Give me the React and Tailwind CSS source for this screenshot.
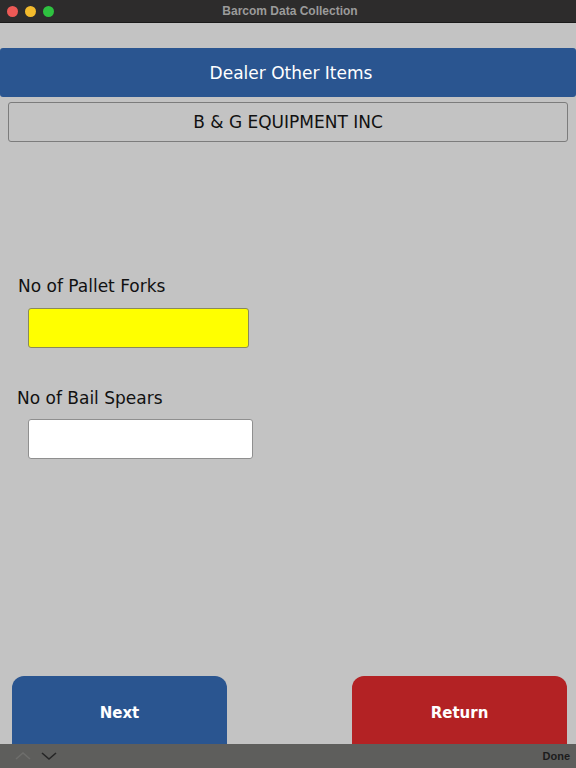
import { useState } from 'react'

// Dealer Other Items screen — Barcom Data Collection
export default function App() {
  const [forks, setForks] = useState('')
  const [spears, setSpears] = useState('')

  return (
    <div className="w-[576px] h-[768px] flex flex-col bg-[#c3c3c3] overflow-hidden" style={{ fontFamily: '"DejaVu Sans", Verdana, sans-serif' }}>
      {/* Window title bar */}
      <div className="relative h-[23px] shrink-0 flex items-center justify-center bg-[#2d2c2c] border-b border-[#1a1a1a]">
        <div className="absolute left-[7px] top-[6px] flex gap-[7px]">
          <span className="w-[11px] h-[11px] rounded-full bg-[#ed5a56]" />
          <span className="w-[11px] h-[11px] rounded-full bg-[#f3bb2d]" />
          <span className="w-[11px] h-[11px] rounded-full bg-[#2ec240]" />
        </div>
        <span className="text-[12px] font-bold text-[#9b9b9b] pl-[4px]" style={{ fontFamily: '"Liberation Sans", Arial, sans-serif' }}>
          Barcom Data Collection
        </span>
      </div>

      {/* Content */}
      <div className="flex-1 flex flex-col overflow-hidden pt-[25px]">
        <div className="h-[49px] shrink-0 flex items-center justify-center bg-[#2a5590] rounded-[3px]">
          <span className="text-[17px] text-white pl-[6px] pt-[2px]">Dealer Other Items</span>
        </div>

        <div className="mt-[5px] mx-[8px] h-[40px] shrink-0 flex items-center justify-center border border-[#7c7c7c] rounded-[3px]">
          <span className="text-[17px] text-[#111] leading-[20px]">B &amp; G EQUIPMENT INC</span>
        </div>

        <div className="pt-[134px] pl-[18px]">
          <div className="text-[17px] text-[#111] leading-[20px]">No of Pallet Forks</div>
          <input
            value={forks}
            onChange={(e) => setForks(e.target.value)}
            className="mt-[12px] ml-[10px] block w-[221px] h-[40px] bg-[#ffff00] border border-[#8a8a5a] rounded-[3px] outline-none px-2"
          />
        </div>

        <div className="pt-[40px] pl-[17px]">
          <div className="text-[17px] text-[#111] leading-[20px]">No of Bail Spears</div>
          <input
            value={spears}
            onChange={(e) => setSpears(e.target.value)}
            className="mt-[11px] ml-[11px] block w-[225px] h-[40px] bg-white border border-[#8f8f8f] rounded-[3px] outline-none px-2"
          />
        </div>

        <div className="mt-auto flex justify-between pl-[12px] pr-[9px] translate-y-[12px]">
          <button className="w-[215px] h-[80px] pb-[6px] rounded-[12px] bg-[#2a5590] text-white text-[15px] font-bold">
            Next
          </button>
          <button className="w-[215px] h-[80px] pb-[6px] rounded-[12px] bg-[#b32224] text-white text-[15px] font-bold">
            Return
          </button>
        </div>
      </div>

      {/* Keyboard accessory bar */}
      <div className="h-[24px] shrink-0 flex items-center justify-between bg-[#5e5e5c] pl-[14px] pr-[6px]">
        <div className="flex items-center gap-[8px]">
          <svg width="18" height="10" viewBox="0 0 18 10" fill="none" stroke="#6e6e6c" strokeWidth="1.6">
            <path d="M2 8 L9 2 L16 8" />
          </svg>
          <svg width="18" height="10" viewBox="0 0 18 10" fill="none" stroke="#262626" strokeWidth="1.6">
            <path d="M2 2 L9 8 L16 2" />
          </svg>
        </div>
        <span className="text-[11px] font-bold text-[#1c1c1c]" style={{ fontFamily: '"Liberation Sans", Arial, sans-serif' }}>Done</span>
      </div>
    </div>
  )
}
